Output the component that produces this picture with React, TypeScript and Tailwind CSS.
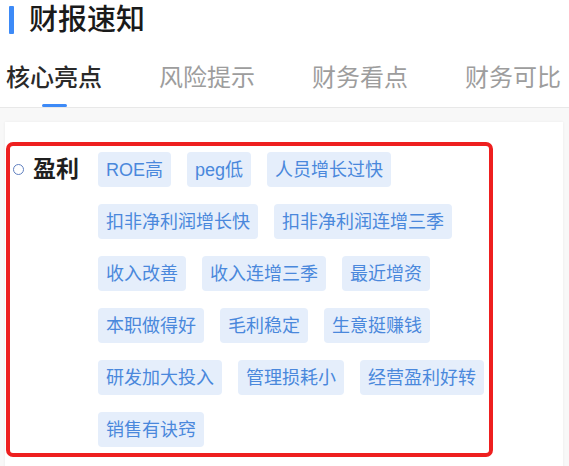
const tabs = ["核心亮点", "风险提示", "财务看点", "财务可比"];

const tags = [
  "ROE高",
  "peg低",
  "人员增长过快",
  "扣非净利润增长快",
  "扣非净利润连增三季",
  "收入改善",
  "收入连增三季",
  "最近增资",
  "本职做得好",
  "毛利稳定",
  "生意挺赚钱",
  "研发加大投入",
  "管理损耗小",
  "经营盈利好转",
  "销售有诀窍",
];

export default function App() {
  return (
    <div
      className="h-[466px] w-[569px] overflow-hidden bg-white"
      style={{ fontFamily: '"Liberation Sans", "Noto Sans CJK SC", sans-serif' }}
    >
      <div className="flex items-center gap-[15px] pl-[9px] pt-[4px]">
        <div className="h-[28px] w-[5px] rounded-[1px] bg-[#3d8af7]" />
        <h2 className="text-[29px] leading-[32px] font-medium text-[#1a1a1a]">财报速知</h2>
      </div>

      <div className="flex gap-[57px] border-b border-[#e8e8e8] pl-[6px]">
        {tabs.map((tab, i) => (
          <div key={tab} className="flex flex-col items-center pt-[30px]">
            <span
              className={
                i === 0
                  ? "text-[24px] leading-[24px] font-medium text-[#2a2a2a]"
                  : "text-[24px] leading-[24px] text-[#9d9d9d]"
              }
            >
              {tab}
            </span>
            <div
              className={
                i === 0
                  ? "mt-[14px] h-[3px] w-[25px] rounded-full bg-[#3d8af7]"
                  : "mt-[14px] h-[3px] w-[25px]"
              }
            />
          </div>
        ))}
      </div>

      <div className="h-full bg-[#f8f8f8] pl-[5px] pt-[14px]">
        <div className="h-full w-[558px] bg-white pl-[1px] pt-[20px] shadow-[0_0_3px_rgba(0,0,0,0.06)]">
          <div className="flex w-[487px] items-start rounded-[7px] border-4 border-[#ee1f1f] py-[6px] pl-[3px]">
            <div className="flex h-[35px] shrink-0 items-center gap-[9px]">
              <div className="h-[11px] w-[11px] rounded-full border-[1.5px] border-[#5f7fc0]" />
              <span className="text-[23px] leading-[23px] font-bold text-[#1f1f1f]">盈利</span>
            </div>
            <div className="ml-[19px] flex flex-1 flex-wrap gap-x-[16px] gap-y-[17px]">
              {tags.map((tag) => (
                <span
                  key={tag}
                  className="flex h-[35px] items-center rounded-[4px] bg-[#e5eefb] px-[8px] text-[18px] leading-[18px] text-[#4a88dc]"
                >
                  {tag}
                </span>
              ))}
            </div>
          </div>
        </div>
      </div>
    </div>
  );
}
